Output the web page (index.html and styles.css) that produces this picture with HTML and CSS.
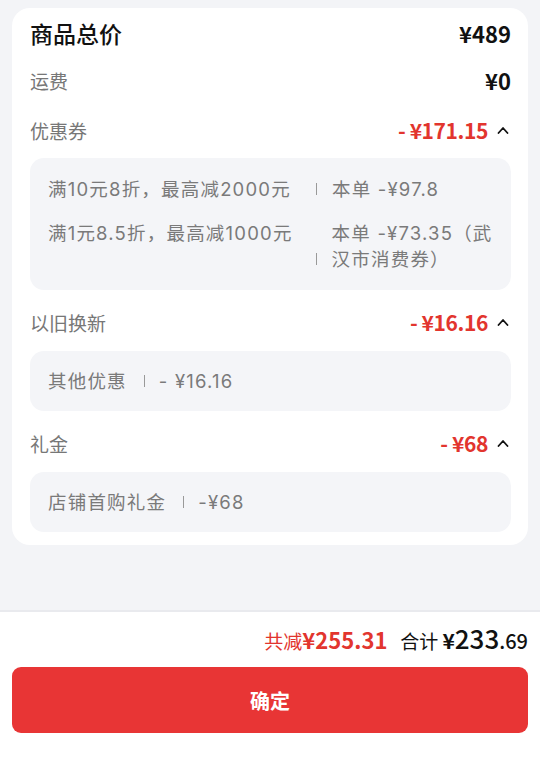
FILE: index.html
```html
<!DOCTYPE html>
<html lang="zh-CN">
<head>
<meta charset="utf-8">
<link rel="stylesheet" href="styles.css">
</head>
<body>
<div class="page">
  <div class="card">
    <div class="row row-title">
      <span class="title">商品总价</span>
      <span class="amount">¥489</span>
    </div>
    <div class="row row-ship">
      <span class="label">运费</span>
      <span class="amount">¥0</span>
    </div>
    <div class="row row-coupon">
      <span class="label">优惠券</span>
      <span class="right"><span class="minus">- ¥171.15</span><svg class="chev" viewBox="0 0 12 8" width="12" height="8"><polyline points="1.5,7 6,2 10.5,7" fill="none" stroke="#111" stroke-width="1.8" stroke-linecap="round" stroke-linejoin="round"/></svg></span>
    </div>
    <div class="box multi">
      <div class="item">
        <span class="left">满10元8折，最高减2000元</span>
        <span class="sep wide"></span>
        <span class="rt">本单 -¥97.8</span>
      </div>
      <div class="item">
        <span class="left">满1元8.5折，最高减1000元</span>
        <span class="sep end"></span>
        <span class="rt">本单 -¥73.35（武汉市消费券）</span>
      </div>
    </div>
    <div class="row">
      <span class="label">以旧换新</span>
      <span class="right"><span class="minus">- ¥16.16</span><svg class="chev" viewBox="0 0 12 8" width="12" height="8"><polyline points="1.5,7 6,2 10.5,7" fill="none" stroke="#111" stroke-width="1.8" stroke-linecap="round" stroke-linejoin="round"/></svg></span>
    </div>
    <div class="box">
      <div class="item">
        <span class="left">其他优惠</span>
        <span class="sep"></span>
        <span class="rt">- ¥16.16</span>
      </div>
    </div>
    <div class="row">
      <span class="label">礼金</span>
      <span class="right"><span class="minus">- ¥68</span><svg class="chev" viewBox="0 0 12 8" width="12" height="8"><polyline points="1.5,7 6,2 10.5,7" fill="none" stroke="#111" stroke-width="1.8" stroke-linecap="round" stroke-linejoin="round"/></svg></span>
    </div>
    <div class="box">
      <div class="item">
        <span class="left">店铺首购礼金</span>
        <span class="sep"></span>
        <span class="rt">-¥68</span>
      </div>
    </div>
  </div>
  <div class="footer">
    <div class="totals">
      <span class="save-label">共减</span><span class="save-amt">¥255.31</span>
      <span class="sum-label">合计</span><span class="yen">¥</span><span class="int">233</span><span class="dec">.69</span>
    </div>
    <button class="confirm">确定</button>
  </div>
</div>
</body>
</html>
```

FILE: styles.css
```css
* { box-sizing: border-box; }
html, body {
  margin: 0;
  padding: 0;
  background: #f3f4f7;
  font-family: "Noto Sans CJK SC", "Noto Sans", sans-serif;
}
.page {
  width: 540px;
  height: 780px;
  display: flex;
  flex-direction: column;
  justify-content: space-between;
  padding-top: 8px;
}
.card {
  margin: 0 12px;
  background: #fff;
  border-radius: 18px;
  padding: 10px 17px 13px 18px;
  display: flex;
  flex-direction: column;
}
.row {
  height: 30px;
  display: flex;
  align-items: center;
  justify-content: space-between;
  margin-top: 17px;
}
.row.row-title { margin-top: 0; }
.row.row-ship { margin-top: 17px; }
.row.row-coupon { margin-top: 20px; }
.title {
  font-size: 23px;
  font-weight: 500;
  color: #111;
}
.label {
  font-size: 19px;
  color: #777;
}
.amount {
  font-size: 22px;
  font-weight: 700;
  color: #111;
}
.right {
  display: flex;
  align-items: center;
}
.minus {
  font-size: 21px;
  font-weight: 600;
  color: #e2352e;
  letter-spacing: -0.4px;
}
.chev { margin-left: 9px; margin-right: 2px; }
.box {
  margin-top: 14px;
  background: #f4f5f8;
  border-radius: 14px;
  padding: 17px 14px 17px 18px;
  display: flex;
  flex-direction: column;
  gap: 18px;
}
.box.multi { margin-top: 13px; padding-top: 18px; padding-bottom: 18px; }
.item {
  display: flex;
  font-family: "Inter", "Noto Sans CJK SC", sans-serif;
  font-size: 18.5px;
  line-height: 26px;
  color: #7a7a7a;
  letter-spacing: 1.2px;
}
.left { flex-shrink: 0; }
.sep {
  flex-shrink: 0;
  width: 1px;
  height: 12px;
  background: #999;
  margin: 7px 14px 0 17px;
}
.sep.wide { margin-left: 25px; margin-right: 15px; }
.sep.end { align-self: flex-end; margin-bottom: 7px; margin-left: 23px; margin-right: 15px; }
.rt { flex: 1; }
.footer {
  background: #fff;
  border-top: 2px solid #e9eaee;
  padding: 5px 12px 47px 12px;
  display: flex;
  flex-direction: column;
}
.totals {
  height: 36px;
  display: flex;
  align-items: baseline;
  justify-content: flex-end;
  padding-top: 2px;
}
.save-label { font-size: 19px; color: #e2352e; }
.save-amt { font-size: 22px; font-weight: 700; color: #e2352e; margin-right: 13px; }
.sum-label { font-size: 19px; color: #111; margin-right: 4px; }
.yen { font-size: 21px; font-weight: 700; color: #111; }
.int { font-size: 26px; font-weight: 500; color: #111; }
.dec { font-size: 20px; font-weight: 500; color: #111; }
.confirm {
  margin-top: 14px;
  height: 66px;
  border: none;
  border-radius: 9px;
  background: #e83535;
  color: #fff;
  font-family: "Noto Sans CJK SC", sans-serif;
  font-size: 20px;
  font-weight: 700;
}
```
